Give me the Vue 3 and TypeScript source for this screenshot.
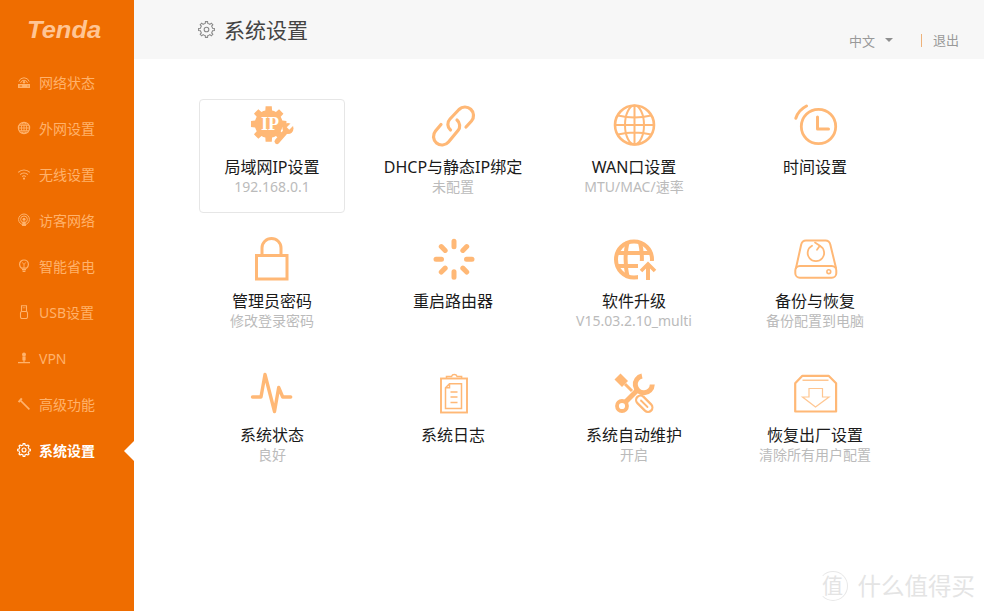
<script setup lang="ts">
function gear(cx: number, cy: number, outer: number, inner: number, teeth: number, tooth = 0.17): string {
    const pts: string[] = [];
    const step = (Math.PI * 2) / teeth;
    for (let i = 0; i < teeth; i++) {
        const a = i * step - Math.PI / 2;
        const list: [number, number][] = [
            [a - step * 0.5, inner],
            [a - step * (tooth + 0.09), inner],
            [a - step * tooth, outer],
            [a + step * tooth, outer],
            [a + step * (tooth + 0.09), inner],
        ];
        for (const [t, r] of list) {
            pts.push(`${(cx + Math.cos(t) * r).toFixed(2)} ${(cy + Math.sin(t) * r).toFixed(2)}`);
        }
    }
    return "M" + pts.join("L") + "Z";
}

function spokes(cx: number, cy: number, r1: number, r2: number, n: number): string {
    let d = "";
    for (let i = 0; i < n; i++) {
        const a = (i * Math.PI * 2) / n;
        d += `M${(cx + Math.sin(a) * r1).toFixed(2)} ${(cy - Math.cos(a) * r1).toFixed(2)}L${(cx + Math.sin(a) * r2).toFixed(2)} ${(cy - Math.cos(a) * r2).toFixed(2)}`;
    }
    return d;
}

const navItems = [
    {
        label: "网络状态",
        icon: `<path d="M1 9h12v4H1z" fill="currentColor" stroke="none"/><path d="M2.6 11h2.5" stroke="#ef6d00" stroke-width="1"/><path d="M10.5 11h1" stroke="#ef6d00" stroke-width="1"/><path d="M3.5 8a3.6 3.6 0 0 1 7 0M1.8 6.5a5.5 5.5 0 0 1 10.4 0" stroke-width="1"/><circle cx="7" cy="7.2" r="1.2" fill="currentColor" stroke="none"/>`,
    },
    {
        label: "外网设置",
        icon: `<circle cx="7" cy="7" r="5.6" stroke-width="1.2"/><ellipse cx="7" cy="7" rx="2.6" ry="5.6" stroke-width=".9"/><path d="M7 1.4v11.2M1.4 7h11.2M2.2 4.3h9.6M2.2 9.7h9.6" stroke-width=".9"/>`,
    },
    {
        label: "无线设置",
        icon: `<path d="M1.2 5.4a8.2 8.2 0 0 1 11.6 0M3.2 7.6a5.3 5.3 0 0 1 7.6 0M5.2 9.6a2.6 2.6 0 0 1 3.6 0" stroke-width="1.1"/><circle cx="7" cy="11.6" r="1.1" fill="currentColor" stroke="none"/>`,
    },
    {
        label: "访客网络",
        icon: `<circle cx="7" cy="6.4" r="5.4" stroke-width="1"/><circle cx="7" cy="6.4" r="3.4" stroke-width="1"/><circle cx="7" cy="6.2" r="1.5" fill="currentColor" stroke="none"/><path d="M5 13l.6-4.5h2.8L9 13z" fill="currentColor" stroke="none"/>`,
    },
    {
        label: "智能省电",
        icon: `<path d="M4.6 9.200C3.400 8.200 2.600 7 2.600 5.400a4.400 4.400 0 0 1 8.800 0c0 1.600-.8 2.800-2 3.800z" stroke-width="1.200"/><path d="M5.300 3.400l1.700 2.200 1.700-2.200M7 5.600v3.200" stroke-width=".9"/><path d="M5 10.600h4M5.600 12.400h2.800" stroke-width="1.300"/>`,
    },
    {
        label: "USB设置",
        icon: `<rect x="3.500" y="6.500" width="7" height="7" rx="1.500" stroke-width="1.100"/><path d="M4.500 6.500V.8h5v5.700" stroke-width="1.100"/><path d="M5.800 2.800h.9M7.400 2.800h.9" stroke-width="1.100"/>`,
    },
    {
        label: "VPN",
        icon: `<circle cx="7" cy="3.400" r="2" fill="currentColor" stroke="none"/><path d="M5.400 5.400h3.200v4H5.400z" fill="currentColor" stroke="none"/><path d="M1 11.600h12" stroke-width="1.300"/><path d="M7 9v2.600" stroke-width="1.200"/>`,
    },
    {
        label: "高级功能",
        icon: `<path d="M1.600 5.200L4.800 1.400" stroke-width="2"/><path d="M3.600 3.600l8.800 8.800" stroke-width="1.600"/>`,
    },
    {
        label: "系统设置",
        active: true,
        icon: `<path d="${gear(7, 7, 6.4, 5, 8)}" stroke-width="1.100"/><circle cx="7" cy="7" r="2" stroke-width="1.100"/>`,
    },
];

const lines = "stroke-linecap=\"round\" stroke-linejoin=\"round\"";

const settings = [
    {
        title: "局域网IP设置",
        sub: "192.168.0.1",
        active: true,
        icon: `<path d="${gear(20.7, 24, 18, 14, 8, 0.22)}" fill="currentColor" stroke="none"/><path d="M47 18L21 47H48z" fill="#fff" stroke="none"/><text x="22" y="29.500" text-anchor="middle" font-family="Liberation Serif, serif" font-weight="700" font-size="18" fill="#fff" stroke="none">IP</text><path d="M29 41.500L39 30" stroke-width="5" ${lines}/><circle cx="40" cy="28.500" r="5.500" fill="currentColor" stroke="none"/><path d="M40 28.500l6-6" stroke="#fff" stroke-width="3.500"/>`,
    },
    {
        title: "DHCP与静态IP绑定",
        sub: "未配置",
        icon: `<path d="M20.500 30a7.500 7.500 0 0 1-.5-11l9-9.500a8.500 8.500 0 0 1 12.500 11.500l-5.500 6" stroke-width="3.200" ${lines}/><path d="M27 20a7.500 7.500 0 0 1 1 10.500l-9.500 11.500a8.500 8.500 0 0 1-13-11l5.500-6.500" stroke-width="3.200" ${lines}/>`,
    },
    {
        title: "WAN口设置",
        sub: "MTU/MAC/速率",
        icon: `<circle cx="23.500" cy="25" r="19.500" stroke-width="2.600"/><ellipse cx="23.500" cy="25" rx="9.500" ry="19.500" stroke-width="2"/><path d="M23.500 5.500v39M4 25h39M7 15.500c10 2.500 23 2.500 33 0M7 34.500c10-2.500 23-2.500 33 0" stroke-width="2"/>`,
    },
    {
        title: "时间设置",
        sub: "",
        icon: `<circle cx="25.500" cy="26.500" r="17.200" stroke-width="2.800"/><path d="M24.500 17v12h11" stroke-width="3" ${lines}/><path d="M2.800 18.200C4.500 12.800 8 8.800 13.500 6" stroke-width="3" ${lines}/>`,
    },
    {
        title: "管理员密码",
        sub: "修改登录密码",
        icon: `<rect x="8.500" y="21.500" width="30.500" height="23.500" stroke-width="3"/><path d="M14 21v-7a9.500 9.500 0 0 1 19 0v7" stroke-width="3"/>`,
    },
    {
        title: "重启路由器",
        sub: "",
        icon: `<path d="${spokes(24, 25.300, 12.500, 18, 8)}" stroke-width="5" ${lines}/>`,
    },
    {
        title: "软件升级",
        sub: "V15.03.2.10_multi",
        icon: `<circle cx="23" cy="25.500" r="18" stroke-width="4"/><path d="M5 19h36M5 32h36" stroke-width="4"/><path d="M16.500 8c-2.500 11-2.500 23 0 35M29 8c2.500 11 2.500 23 0 35" stroke-width="4"/><path d="M27 27h21v20H27z" fill="#fff" stroke="none"/><path d="M37 46V31" stroke-width="4"/><path d="M30 37l7-7 7 7" stroke-width="3.600"/>`,
    },
    {
        title: "备份与恢复",
        sub: "备份配置到电脑",
        icon: `<path d="M3 34L8.200 10.500Q9.200 6.500 13 6.500h19.500q3.800 0 4.800 4L43 34" stroke-width="2" ${lines}/><rect x="2.300" y="32" width="41" height="11.700" rx="4.500" stroke-width="2"/><circle cx="35.800" cy="37.700" r="1.900" stroke-width="1.600"/><path d="M19 11.800a8.200 8.200 0 1 0 7.800 0" stroke-width="1.800" ${lines}/><path d="M22 8.600l4.800 3.200-2.800 4" stroke-width="1.800" ${lines}/>`,
    },
    {
        title: "系统状态",
        sub: "良好",
        icon: `<path d="M4.500 29h8.500l4-22.500 9.500 37 4.200-24 4 9.500h8" stroke-width="3.400" ${lines}/>`,
    },
    {
        title: "系统日志",
        sub: "",
        icon: `<rect x="11" y="10.500" width="26" height="34" stroke-width="1.900"/><path d="M16.500 10.500v-2h5a3 3 0 0 1 5.600 0h4.500v2" stroke-width="1.500"/><path d="M19.500 15.700h12v24.800h-16v-20.800zM15.500 19.700h4v-4" stroke-width="1.500"/><path d="M20.500 24h7M20.500 29h7M20.500 34.500h7" stroke-width="1.500"/>`,
    },
    {
        title: "系统自动维护",
        sub: "开启",
        icon: `<path d="M6.500 8.500L14 16" stroke-width="8.500"/><path d="M14 16l7 7" stroke-width="3"/><path d="M29.500 32l7.500 7.500" stroke-width="11" ${lines}/><path d="M29.500 32l7.500 7.500" stroke="#fff" stroke-width="6.500" ${lines}/><path d="M30 32.500l6.500 6.500" stroke-width="1.800" ${lines}/><path d="M14.500 34L28 20.500" stroke-width="5"/><circle cx="11" cy="38" r="5" stroke-width="3.800"/><path d="M31 8A8.500 8.500 0 1 0 41.300 16.500" stroke-width="5"/>`,
    },
    {
        title: "恢复出厂设置",
        sub: "清除所有用户配置",
        icon: `<path d="M2.200 15.300L9.400 7.800h26.200l7.500 7.500v28.200H2.200z" stroke-width="2.200" stroke-linejoin="round"/><path d="M9.500 12.200h26" stroke-width="1.200"/><path d="M16 20.500h13.500v8.500h6.500L22.500 39 9.500 29h6.500z" stroke-width="1.200" opacity=".8"/>`,
    },
];

const headerGear = `<path d="${gear(8, 8, 7.500, 5.800, 8)}" stroke-width="1"/><circle cx="8" cy="8" r="2.200" stroke-width="1"/>`;
</script>

<template>
    <div class="page">
        <aside class="sidebar">
            <div class="sidebar__logo"><span>Tenda</span></div>
            <nav class="sidebar__nav">
                <a
                    v-for="item in navItems"
                    :key="item.label"
                    class="nav-item"
                    :class="{ 'nav-item_active': item.active }"
                >
                    <svg class="nav-item__icon" viewBox="0 0 14 14" fill="none" stroke="currentColor" v-html="item.icon"></svg>
                    <span>{{ item.label }}</span>
                </a>
            </nav>
        </aside>

        <main class="main">
            <header class="header">
                <div class="header__title">
                    <svg class="header__gear" viewBox="0 0 16 16" fill="none" stroke="currentColor" v-html="headerGear"></svg>
                    <h1>系统设置</h1>
                </div>
                <div class="header__actions">
                    <span class="header__lang">中文</span>
                    <i class="header__caret"></i>
                    <span class="header__logout">退出</span>
                </div>
            </header>

            <section class="grid">
                <div
                    v-for="item in settings"
                    :key="item.title"
                    class="tile"
                    :class="{ tile_active: item.active }"
                >
                    <svg class="tile__icon" viewBox="0 0 48 48" fill="none" stroke="currentColor" v-html="item.icon"></svg>
                    <div class="tile__title">{{ item.title }}</div>
                    <div class="tile__sub">{{ item.sub }}</div>
                </div>
            </section>
        </main>

        <div class="watermark">
            <span class="watermark__badge">值</span>
            <span class="watermark__text">什么值得买</span>
        </div>
    </div>
</template>

<style scoped>
.page {
    position: relative;
    display: flex;

    width: 984px;
    height: 611px;
    overflow: hidden;

    background-color: #fff;
    font-family: "Noto Sans", "Noto Sans CJK SC", sans-serif;
}

.sidebar {
    flex: 0 0 134px;
    background-color: #ef6d00;
}

.sidebar__logo {
    height: 59px;
    padding: 14px 0 0 27px;
    box-sizing: border-box;

    color: #ffc594;
    font-family: "Liberation Sans", sans-serif;
    font-size: 23px;
    font-style: italic;
    font-weight: 700;
    line-height: 32px;
}

.sidebar__logo span {
    display: inline-block;
    transform: scaleX(1.11);
    transform-origin: left center;
}

.nav-item {
    position: relative;
    display: flex;
    align-items: center;
    gap: 8px;

    height: 46px;
    padding-left: 17px;

    color: #ffb26b;
    font-size: 14px;
}

.nav-item_active {
    color: #fff;
    font-weight: 700;
}

.nav-item_active::after {
    content: "";
    position: absolute;
    top: 14px;
    right: 0;

    border-top: 10px solid transparent;
    border-bottom: 10px solid transparent;
    border-right: 10px solid #fff;
}

.nav-item__icon {
    width: 14px;
    height: 14px;
}

.main {
    flex: 1;
    display: flex;
    flex-direction: column;
}

.header {
    display: flex;
    justify-content: space-between;

    height: 59px;
    padding: 0 25px 0 64px;

    background-color: #f7f7f7;
}

.header__title {
    display: flex;
    align-items: center;
    gap: 9px;
}

.header__title h1 {
    margin: -2px 0 0;

    color: #444;
    font-size: 21px;
    font-weight: 400;
}

.header__gear {
    width: 17px;
    height: 17px;
    color: #8a8a8a;
}

.header__actions {
    display: flex;
    align-items: center;
    align-self: flex-end;

    height: 20px;
    margin-bottom: 9px;

    color: #999;
    font-size: 13px;
}

.header__caret {
    margin-left: 10px;

    border-top: 4px solid #8f8f8f;
    border-left: 4px solid transparent;
    border-right: 4px solid transparent;
}

.header__logout {
    margin-left: 28px;
    padding-left: 11px;

    border-left: 1px solid #eeb27a;
    line-height: 13px;
}

.grid {
    display: grid;
    grid-template-columns: repeat(4, 146px);
    grid-auto-rows: 114px;
    column-gap: 35px;
    row-gap: 20px;

    padding: 40px 0 0 65px;
}

.tile {
    display: flex;
    flex-direction: column;
    align-items: center;

    box-sizing: border-box;
    border: 1px solid transparent;
    border-radius: 4px;
}

.tile_active {
    border-color: #e6e6e6;
}

.tile__icon {
    flex: none;
    width: 48px;
    height: 48px;
    color: #ffb876;
}

/* icons sit slightly off the text centre in the later columns */
.tile:nth-child(4n + 2) .tile__icon {
    margin-left: 1px;
}

.tile:nth-child(4n + 3) .tile__icon {
    margin-left: 2px;
}

.tile:nth-child(4n) .tile__icon {
    margin-left: 3px;
}

.tile__title {
    margin-top: 8px;

    color: #1a1a1a;
    font-size: 16px;
    line-height: 22px;
    white-space: nowrap;
}

.tile__sub {
    color: #bbb;
    font-size: 14px;
    line-height: 18px;
    white-space: nowrap;
}

.watermark {
    position: absolute;
    right: 9px;
    bottom: 10px;

    display: flex;
    align-items: center;
    gap: 10px;

    color: #e4e4e4;
}

.watermark__badge {
    width: 28px;
    height: 28px;

    border: 1px solid #e8e8e8;
    border-left-color: transparent;
    border-radius: 50%;

    font-size: 21px;
    line-height: 27px;
    text-align: center;
}

.watermark__text {
    font-size: 23.5px;
    line-height: 30px;
}
</style>
